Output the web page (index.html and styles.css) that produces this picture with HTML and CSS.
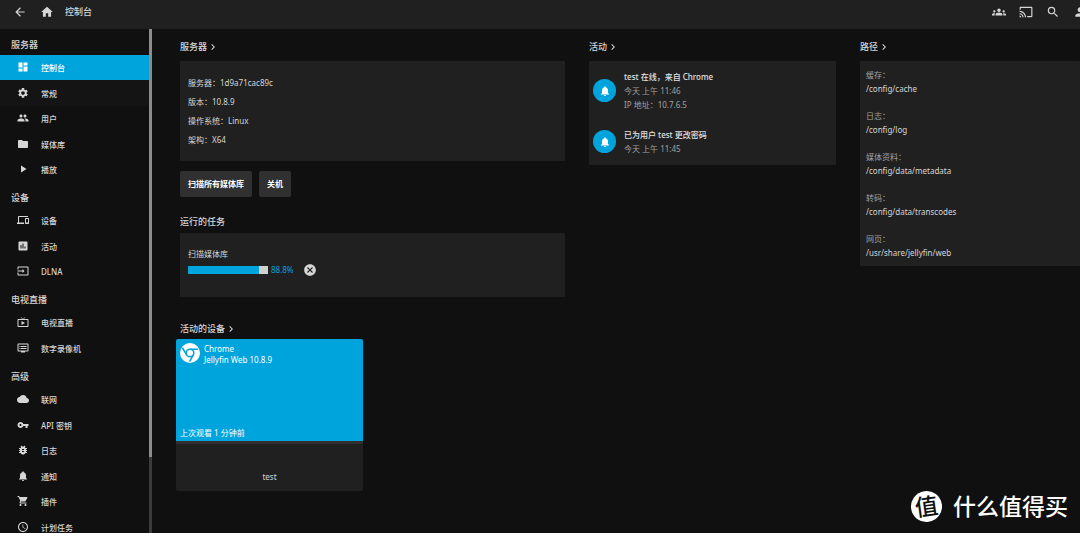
FILE: index.html
```html
<!DOCTYPE html>
<html lang="zh-CN">
<head>
<meta charset="utf-8">
<title>控制台</title>
<link rel="stylesheet" href="styles.css">
</head>
<body>
<header class="topbar">
  <button class="icon-button" aria-label="返回"><svg viewBox="0 0 24 24"><path d="M20 11H7.83l5.59-5.59L12 4l-8 8 8 8 1.41-1.41L7.83 13H20v-2z"/></svg></button>
  <a class="icon-button" href="#home" aria-label="主页"><svg viewBox="0 0 24 24"><path d="M10 20v-6h4v6h5v-8h3L12 3 2 12h3v8z"/></svg></a>
  <h1 class="topbar-title">控制台</h1>
  <div class="topbar-actions">
    <button class="icon-button" aria-label="同步播放"><svg viewBox="0 0 24 24"><path d="M12 12.75c1.63 0 3.07.39 4.24.9 1.08.48 1.76 1.56 1.76 2.73V18H6v-1.61c0-1.18.68-2.26 1.76-2.73 1.17-.52 2.61-.91 4.24-.91zM4 13c1.1 0 2-.9 2-2s-.9-2-2-2-2 .9-2 2 .9 2 2 2zm1.13 1.1C4.76 14.04 4.39 14 4 14c-.99 0-1.93.21-2.78.58C.48 14.9 0 15.62 0 16.43V18h4.5v-1.61c0-.83.23-1.61.63-2.29zM20 13c1.1 0 2-.9 2-2s-.9-2-2-2-2 .9-2 2 .9 2 2 2zm4 3.43c0-.81-.48-1.53-1.22-1.85A6.95 6.95 0 0 0 20 14c-.39 0-.76.04-1.13.1.4.68.63 1.46.63 2.29V18H24v-1.57zM12 6c1.66 0 3 1.34 3 3s-1.34 3-3 3-3-1.34-3-3 1.34-3 3-3z"/></svg></button>
    <button class="icon-button" aria-label="投屏"><svg viewBox="0 0 24 24"><path d="M21 3H3c-1.1 0-2 .9-2 2v3h2V5h18v14h-7v2h7c1.1 0 2-.9 2-2V5c0-1.1-.9-2-2-2zM1 18v3h3c0-1.66-1.34-3-3-3zm0-4v2c2.76 0 5 2.24 5 5h2c0-3.87-3.13-7-7-7zm0-4v2c4.97 0 9 4.03 9 9h2c0-6.08-4.93-11-11-11z"/></svg></button>
    <button class="icon-button" aria-label="搜索"><svg viewBox="0 0 24 24"><path d="M15.5 14h-.79l-.28-.27A6.47 6.47 0 0 0 16 9.5 6.5 6.5 0 1 0 9.5 16c1.61 0 3.09-.59 4.23-1.57l.27.28v.79l5 4.99L20.49 19l-4.99-5zm-6 0C7.01 14 5 11.99 5 9.5S7.01 5 9.5 5 14 7.01 14 9.5 11.99 14 9.5 14z"/></svg></button>
    <button class="icon-button" aria-label="用户"><svg viewBox="0 0 24 24"><path d="M12 12c2.21 0 4-1.79 4-4s-1.79-4-4-4-4 1.79-4 4 1.79 4 4 4zm0 2c-2.67 0-8 1.34-8 4v2h16v-2c0-2.66-5.33-4-8-4z"/></svg></button>
  </div>
</header>
<div class="layout">
  <nav class="sidebar">
    <div class="sidebar-content">
      <h2 class="nav-title">服务器</h2>
      <div class="nav-group">
        <a class="nav-link active" href="#dashboard"><svg viewBox="0 0 24 24"><path d="M3 13h8V3H3v10zm0 8h8v-6H3v6zm10 0h8V11h-8v10zm0-18v6h8V3h-8z"/></svg>控制台</a>
        <a class="nav-link hovered" href="#general"><svg viewBox="0 0 24 24"><path d="M19.14 12.94c.04-.3.06-.61.06-.94 0-.32-.02-.64-.07-.94l2.03-1.58c.18-.14.23-.41.12-.61l-1.92-3.32c-.12-.22-.37-.29-.59-.22l-2.39.96c-.5-.38-1.03-.7-1.62-.94l-.36-2.54A.48.48 0 0 0 13.92 2h-3.84c-.24 0-.43.17-.47.41l-.36 2.54c-.59.24-1.13.57-1.62.94l-2.39-.96c-.22-.08-.47 0-.59.22L2.74 8.87c-.12.21-.08.47.12.61l2.03 1.58c-.05.3-.09.63-.09.94s.02.64.07.94l-2.03 1.58c-.18.14-.23.41-.12.61l1.92 3.32c.12.22.37.29.59.22l2.39-.96c.5.38 1.03.7 1.62.94l.36 2.54c.05.24.24.41.48.41h3.84c.24 0 .44-.17.47-.41l.36-2.54c.59-.24 1.13-.56 1.62-.94l2.39.96c.22.08.47 0 .59-.22l1.92-3.32c.12-.22.07-.47-.12-.61l-2.01-1.58zM12 15.6c-1.98 0-3.6-1.62-3.6-3.6s1.62-3.6 3.6-3.6 3.6 1.62 3.6 3.6-1.62 3.6-3.6 3.6z"/></svg>常规</a>
        <a class="nav-link" href="#users"><svg viewBox="0 0 24 24"><path d="M16 11c1.66 0 2.99-1.34 2.99-3S17.66 5 16 5s-3 1.34-3 3 1.34 3 3 3zm-8 0c1.66 0 2.99-1.34 2.99-3S9.66 5 8 5 5 6.34 5 8s1.34 3 3 3zm0 2c-2.33 0-7 1.17-7 3.5V19h14v-2.500C15 14.170 10.330 13 8 13zm8 0c-.29 0-.62.02-.97.05 1.16.84 1.97 1.970 1.970 3.450V19h6v-2.500c0-2.330-4.670-3.500-7-3.500z"/></svg>用户</a>
        <a class="nav-link" href="#libraries"><svg viewBox="0 0 24 24"><path d="M10 4H4c-1.100 0-2 .9-2 2v12c0 1.100.9 2 2 2h16c1.100 0 2-.9 2-2V8c0-1.100-.9-2-2-2h-8l-2-2z"/></svg>媒体库</a>
        <a class="nav-link" href="#playback"><svg viewBox="0 0 24 24"><path d="M8 5v14l11-7z"/></svg>播放</a>
      </div>
      <h2 class="nav-title">设备</h2>
      <div class="nav-group">
        <a class="nav-link" href="#devices"><svg viewBox="0 0 24 24"><path d="M4 6h18V4H4c-1.100 0-2 .9-2 2v11H0v3h14v-3H4V6zm19 2h-6c-.55 0-1 .45-1 1v10c0 .55.45 1 1 1h6c.55 0 1-.45 1-1V9c0-.55-.45-1-1-1zm-1 9h-4v-7h4v7z"/></svg>设备</a>
        <a class="nav-link" href="#activity"><svg viewBox="0 0 24 24"><path d="M19 3H5c-1.100 0-2 .9-2 2v14c0 1.100.9 2 2 2h14c1.100 0 2-.9 2-2V5c0-1.100-.9-2-2-2zM9 17H7v-7h2v7zm4 0h-2V7h2v10zm4 0h-2v-4h2v4z"/></svg>活动</a>
        <a class="nav-link" href="#dlna"><svg viewBox="0 0 24 24"><path d="M21 3.010H3c-1.100 0-2 .9-2 2V9h2V4.990h18v14.030H3V15H1v4.010c0 1.100.9 1.980 2 1.980h18c1.100 0 2-.88 2-1.980v-14c0-1.110-.9-2-2-2zM11 16l4-4-4-4v3H1v2h10v3z"/></svg>DLNA</a>
      </div>
      <h2 class="nav-title">电视直播</h2>
      <div class="nav-group">
        <a class="nav-link" href="#livetv"><svg viewBox="0 0 24 24"><path d="M21 6h-7.590l3.290-3.290L16 2l-4 4-4-4-.71.71L10.590 6H3c-1.100 0-2 .89-2 2v12c0 1.100.9 2 2 2h18c1.100 0 2-.9 2-2V8c0-1.110-.9-2-2-2zm0 14H3V8h18v12zM9 10v8l7-4z"/></svg>电视直播</a>
        <a class="nav-link" href="#dvr"><svg viewBox="0 0 24 24"><path d="M21 3H3c-1.100 0-2 .9-2 2v12c0 1.100.9 2 2 2h5v2h8v-2h5c1.100 0 1.990-.9 1.990-2L23 5c0-1.100-.9-2-2-2zm0 14H3V5h18v12zm-2-9H8v2h11V8zm0 4H8v2h11v-2zM7 8H5v2h2V8zm0 4H5v2h2v-2z"/></svg>数字录像机</a>
      </div>
      <h2 class="nav-title">高级</h2>
      <div class="nav-group">
        <a class="nav-link" href="#network"><svg viewBox="0 0 24 24"><path d="M19.350 10.040A7.490 7.490 0 0 0 12 4C9.110 4 6.600 5.640 5.350 8.040A5.994 5.994 0 0 0 0 14c0 3.310 2.690 6 6 6h13c2.760 0 5-2.240 5-5 0-2.640-2.050-4.780-4.650-4.960z"/></svg>联网</a>
        <a class="nav-link" href="#keys"><svg viewBox="0 0 24 24"><path d="M12.650 10C11.830 7.670 9.610 6 7 6c-3.310 0-6 2.690-6 6s2.690 6 6 6c2.610 0 4.830-1.670 5.650-4H17v4h4v-4h2v-4H12.650zM7 14c-1.100 0-2-.9-2-2s.9-2 2-2 2 .9 2 2-.9 2-2 2z"/></svg>API 密钥</a>
        <a class="nav-link" href="#logs"><svg viewBox="0 0 24 24"><path d="M20 8h-2.810c-.45-.78-1.070-1.450-1.820-1.960L17 4.410 15.590 3l-2.170 2.170C12.960 5.060 12.490 5 12 5s-.96.06-1.410.17L8.410 3 7 4.410l1.620 1.630C7.880 6.550 7.260 7.220 6.810 8H4v2h2.090c-.05.33-.09.66-.09 1v1H4v2h2v1c0 .34.04.67.09 1H4v2h2.810c1.040 1.790 2.970 3 5.190 3s4.150-1.210 5.190-3H20v-2h-2.090c.05-.33.09-.66.09-1v-1h2v-2h-2v-1c0-.34-.04-.67-.09-1H20V8zm-6 8h-4v-2h4v2zm0-4h-4v-2h4v2z"/></svg>日志</a>
        <a class="nav-link" href="#notifications"><svg viewBox="0 0 24 24"><path d="M12 22c1.100 0 2-.9 2-2h-4c0 1.100.89 2 2 2zm6-6v-5c0-3.070-1.640-5.640-4.500-6.320V4c0-.83-.67-1.500-1.500-1.500s-1.500.67-1.500 1.500v.68C7.630 5.360 6 7.920 6 11v5l-2 2v1h16v-1l-2-2z"/></svg>通知</a>
        <a class="nav-link" href="#plugins"><svg viewBox="0 0 24 24"><path d="M7 18c-1.100 0-1.990.9-1.990 2S5.900 22 7 22s2-.9 2-2-.9-2-2-2zM1 2v2h2l3.600 7.590-1.350 2.450c-.16.28-.25.61-.25.96 0 1.100.9 2 2 2h12v-2H7.420c-.14 0-.25-.11-.25-.25l.03-.12.9-1.630h7.450c.75 0 1.410-.41 1.750-1.030l3.580-6.490A1 1 0 0 0 20 4H5.210l-.94-2H1zm16 16c-1.100 0-1.990.9-1.990 2s.89 2 1.990 2 2-.9 2-2-.9-2-2-2z"/></svg>插件</a>
        <a class="nav-link" href="#tasks"><svg viewBox="0 0 24 24"><path d="M11.990 2C6.470 2 2 6.480 2 12s4.470 10 9.990 10C17.520 22 22 17.520 22 12S17.520 2 11.990 2zM12 20c-4.420 0-8-3.580-8-8s3.580-8 8-8 8 3.580 8 8-3.580 8-8 8zm.5-13H11v6l5.250 3.150.75-1.230-4.500-2.670z"/></svg>计划任务</a>
      </div>
    </div>
    <div class="scroll-track"><div class="scroll-thumb"></div></div>
  </nav>
  <main class="dashboard">
    <div class="column">
      <h2 class="section-title"><a href="#general">服务器<svg viewBox="0 0 24 24"><path d="M10 6L8.590 7.410 13.170 12l-4.580 4.590L10 18l6-6z"/></svg></a></h2>
      <section class="panel server-info">
        <p>服务器：1d9a71cac89c</p>
        <p>版本：10.8.9</p>
        <p>操作系统：Linux</p>
        <p>架构：X64</p>
      </section>
      <div class="button-row">
        <button class="button">扫描所有媒体库</button>
        <button class="button">关机</button>
      </div>
      <h2 class="section-title tasks-title">运行的任务</h2>
      <section class="panel tasks">
        <p id="task-name">扫描媒体库</p>
        <div class="task-progress">
          <progress aria-labelledby="task-name" max="100" value="88.8"></progress>
          <span class="percent">88.8%</span>
          <button class="cancel" aria-label="停止"><svg viewBox="0 0 24 24"><path d="M12 2C6.470 2 2 6.470 2 12s4.470 10 10 10 10-4.470 10-10S17.530 2 12 2zm5 13.590L15.590 17 12 13.410 8.410 17 7 15.590 10.590 12 7 8.410 8.410 7 12 10.590 15.590 7 17 8.410 13.410 12 17 15.590z"/></svg></button>
        </div>
      </section>
      <h2 class="section-title devices-title"><a href="#devices">活动的设备<svg viewBox="0 0 24 24"><path d="M10 6L8.590 7.410 13.170 12l-4.580 4.590L10 18l6-6z"/></svg></a></h2>
      <article class="device">
        <div class="device-screen">
          <div class="device-head">
            <svg class="chrome" viewBox="0 0 42 42"><circle cx="21" cy="21" r="21" fill="#fff"/><g fill="none" stroke="#00a4dc" stroke-width="3.200"><circle cx="21" cy="21" r="8"/><path d="M21 13h17M14 25L5 10M28 25L20 39"/></g></svg>
            <div><p>Chrome</p><p>Jellyfin Web 10.8.9</p></div>
          </div>
          <p class="last-seen">上次观看 1 分钟前</p>
        </div>
        <div class="device-user">test</div>
      </article>
    </div>
    <div class="column">
      <h2 class="section-title"><a href="#activity">活动<svg viewBox="0 0 24 24"><path d="M10 6L8.590 7.410 13.170 12l-4.580 4.590L10 18l6-6z"/></svg></a></h2>
      <section class="panel activities">
        <article class="activity">
          <span class="badge"><svg viewBox="0 0 24 24"><path d="M12 22c1.100 0 2-.9 2-2h-4c0 1.100.89 2 2 2zm6-6v-5c0-3.070-1.640-5.640-4.500-6.320V4c0-.83-.67-1.500-1.500-1.500s-1.500.67-1.500 1.500v.68C7.630 5.360 6 7.920 6 11v5l-2 2v1h16v-1l-2-2z"/></svg></span>
          <div><h3>test 在线，来自 Chrome</h3><p>今天 上午 11:46</p><p>IP 地址：10.7.6.5</p></div>
        </article>
        <article class="activity">
          <span class="badge"><svg viewBox="0 0 24 24"><path d="M12 22c1.100 0 2-.9 2-2h-4c0 1.100.89 2 2 2zm6-6v-5c0-3.070-1.640-5.640-4.500-6.320V4c0-.83-.67-1.500-1.500-1.500s-1.500.67-1.500 1.500v.68C7.630 5.360 6 7.920 6 11v5l-2 2v1h16v-1l-2-2z"/></svg></span>
          <div><h3>已为用户 test 更改密码</h3><p>今天 上午 11:45</p></div>
        </article>
      </section>
    </div>
    <div class="column">
      <h2 class="section-title"><a href="#paths">路径<svg viewBox="0 0 24 24"><path d="M10 6L8.590 7.410 13.170 12l-4.580 4.590L10 18l6-6z"/></svg></a></h2>
      <dl class="panel paths">
        <div><dt>缓存：</dt><dd>/config/cache</dd></div>
        <div><dt>日志：</dt><dd>/config/log</dd></div>
        <div><dt>媒体资料：</dt><dd>/config/data/metadata</dd></div>
        <div><dt>转码：</dt><dd>/config/data/transcodes</dd></div>
        <div><dt>网页：</dt><dd>/usr/share/jellyfin/web</dd></div>
      </dl>
    </div>
  </main>
</div>
<div class="watermark"><span class="watermark-seal">值</span><span>什么值得买</span></div>
</body>
</html>
```
FILE: styles.css
```css
* { box-sizing: border-box; }

body {
  margin: 0;
  height: 100vh;
  display: flex;
  flex-direction: column;
  overflow: hidden;
  background: #101010;
  color: #d6d6d6;
  font: 8px/14px "Noto Sans", "Noto Sans CJK SC", sans-serif;
}

h1, h2, h3, p, dl, dd { margin: 0; font-size: inherit; font-weight: 400; }
h1, h2, h3 { font-weight: 500; }
a { color: inherit; text-decoration: none; }
button { border: 0; padding: 0; color: inherit; font: inherit; }
svg { display: block; flex: none; fill: currentColor; }

.topbar {
  flex: none;
  display: flex;
  align-items: center;
  height: 29px;
  padding: 0 0 5px 13px;
  background: #202020;
}
.icon-button { flex: none; width: 14px; margin-right: 13px; background: none; }
.icon-button svg { width: 14px; height: 14px; }
.topbar-title { font-size: 9px; margin-left: -2px; }
.topbar-actions { display: flex; margin-left: auto; margin-right: -20px; }

.layout { flex: 1; min-height: 0; display: flex; }

.sidebar { flex: none; width: 152px; display: flex; }
.sidebar-content { flex: 1; overflow: hidden; }
.nav-title { height: 26px; padding: 4px 0 0 11px; font-size: 9px; line-height: 24px; }
.nav-link { display: flex; align-items: center; gap: 12px; height: 25px; padding: 1px 0 0 17px; font-weight: 500; }
.nav-link:nth-child(even) { height: 26px; }
.nav-link svg { width: 12px; height: 12px; margin-bottom: 2px; }
.nav-link.active { background: #00a4dc; color: #fff; }
.nav-link.hovered { background: #141414; }
.scroll-track { width: 3px; background: #3b3b3b; }
.scroll-thumb { height: 85%; background: #8c8c8c; }

.dashboard {
  flex: 1;
  display: grid;
  grid-template-columns: 385fr 247fr 220fr;
  gap: 24px;
  align-items: start;
  padding: 10px 0 0 28px;
}
.column { min-width: 0; }
.section-title { margin-bottom: 6px; font-size: 9px; line-height: 16px; }
.section-title a { display: flex; align-items: center; }
.section-title svg { width: 12px; height: 12px; }
.panel { background: #202020; border-radius: 1px; }

.server-info { padding: 12px 8px; line-height: 19px; }
.button-row { display: flex; gap: 7px; margin: 10px 0 17px; }
.button { height: 26px; padding: 0 8px; border-radius: 2px; background: #303030; color: #fff; font-weight: 700; }
.tasks-title { margin-bottom: 3px; }
.tasks { padding: 14px 8px 19px; }
.task-progress { display: flex; align-items: center; height: 16px; margin-top: 1px; }
progress { appearance: none; display: block; width: 80px; height: 8px; border: 0; background: #d0d0d0; }
progress::-webkit-progress-bar { background: #d0d0d0; }
progress::-webkit-progress-value { background: #00a4dc; }
.percent { margin-left: 3px; color: #00a4dc; }
.cancel { margin-left: 9px; background: none; }
.cancel svg { width: 14px; height: 14px; }

.devices-title { margin: 24px 0 2px; }
.device { width: 187px; margin-left: -4px; border-radius: 2px; overflow: hidden; background: #202020; }
.device-screen {
  display: flex;
  flex-direction: column;
  justify-content: space-between;
  height: 105px;
  padding: 4px 4px 1px;
  border-bottom: 3px solid #303030;
  background: #00a4dc;
  color: #fff;
}
.device-head { display: flex; gap: 4px; line-height: 11px; }
.chrome { width: 20px; height: 20px; }
.device-user { padding: 26px 0 7px; text-align: center; }

.activities { padding-bottom: 2px; }
.activity { display: flex; align-items: center; gap: 8px; padding: 8px 4px 7px; color: #a0a0a0; }
.activity h3 { color: #e0e0e0; line-height: 15px; }
.badge { flex: none; display: grid; place-items: center; width: 23px; height: 23px; border-radius: 50%; background: #00a4dc; color: #fff; }
.badge svg { width: 12px; height: 12px; }

.paths div { padding: 7px 6px 6px; }
.paths dt { color: #a0a0a0; }

.watermark {
  position: absolute;
  right: 12px;
  bottom: 11px;
  display: flex;
  align-items: center;
  gap: 11px;
  color: #fff;
  font-size: 23px;
  font-weight: 500;
  line-height: 32px;
}
.watermark-seal {
  width: 31px;
  height: 31px;
  border-radius: 50%;
  background: #fff;
  color: #101010;
  font-size: 23px;
  line-height: 30px;
  text-align: center;
  transform: rotate(-8deg);
}
```
